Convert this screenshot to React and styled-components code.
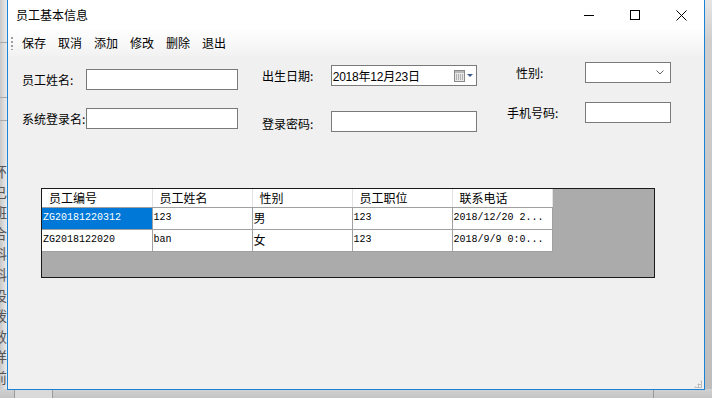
import React from 'react';
import styled, { createGlobalStyle } from 'styled-components';

const Global = createGlobalStyle`
  html, body {
    margin: 0;
    padding: 0;
    width: 712px;
    height: 398px;
    overflow: hidden;
    font-family: "Noto Sans CJK SC", "Liberation Sans", sans-serif;
    font-size: 12px;
    color: #000;
  }
`;

const Desktop = styled.div`
  position: relative;
  width: 712px;
  height: 398px;
  overflow: hidden;
  background: linear-gradient(90deg, #c8c8c8 0px, #e2e2e2 5px, #f0f0f0 8px);
`;

const BackPanel = styled.div`
  position: absolute;
  left: -7px;
  top: 163px;
  display: flex;
  flex-direction: column;
  gap: 4px;
  color: #555;
  font-size: 14px;
  line-height: 16.6px;
`;

const BackLine = styled.div`
  position: absolute;
  left: 0;
  width: 8px;
  top: ${(p) => p.y}px;
  border-top: 1px solid #a8a8a8;
`;

const BottomStrip = styled.div`
  position: absolute;
  left: 0;
  right: 0;
  bottom: 0;
  height: 9px;
  background: linear-gradient(#d2d2d2, #c4c4c4);
  display: flex;
`;

const BottomTab = styled.div`
  width: ${(p) => p.w}px;
  border-right: 1px solid #9a9a9a;
  background: ${(p) => (p.light ? '#dadada' : 'transparent')};
`;

const RightStrip = styled.div`
  position: absolute;
  right: 0;
  top: 0;
  width: 8px;
  height: 390px;
  background: linear-gradient(#e6e6e6, #cfcfcf 40px, #bdbdbd);
`;

const Window = styled.div`
  position: absolute;
  left: 7px;
  top: -1px;
  width: 698px;
  height: 391px;
  box-sizing: border-box;
  border: 1px solid #1883d7;
  background: #f0f0f0;
  display: flex;
  flex-direction: column;
`;

const TitleBar = styled.div`
  height: 30px;
  background: #fff;
  display: flex;
  align-items: center;
  padding-left: 8px;
  flex-shrink: 0;
`;

const Title = styled.div`
  flex: 1;
  font-size: 12px;
  padding-bottom: 2px;
`;

const CtrlButton = styled.div`
  width: 46px;
  height: 30px;
  display: flex;
  align-items: center;
  justify-content: center;
`;

const Toolbar = styled.div`
  height: 26px;
  flex-shrink: 0;
  display: flex;
  align-items: center;
  gap: 12px;
  padding-left: 3px;
  background: linear-gradient(#fefefe, #f2f2f2);
`;

const Grip = styled.div`
  width: 2px;
  height: 14px;
  margin-right: -3px;
  background-image: radial-gradient(circle, #a0a0a0 0.9px, transparent 1px);
  background-size: 2px 4px;
`;

const MenuItem = styled.div`
  font-size: 12px;
  line-height: 16px;
`;

const Form = styled.div`
  height: 132px;
  flex-shrink: 0;
  display: flex;
  padding-left: 14px;
`;

const Column = styled.div`
  width: ${(p) => p.w}px;
  margin-right: ${(p) => p.mr || 0}px;
  padding-top: ${(p) => p.top}px;
  display: flex;
  flex-direction: column;
  gap: ${(p) => p.gap}px;
`;

const Field = styled.div`
  display: flex;
  align-items: center;
  height: 21px;
`;

const Label = styled.div`
  width: ${(p) => p.w}px;
  padding-left: ${(p) => p.indent || 0}px;
  box-sizing: border-box;
  white-space: nowrap;
  font-size: 12px;
  position: relative;
  top: ${(p) => p.dy || 0}px;
`;

const Input = styled.div`
  width: ${(p) => p.w}px;
  height: 21px;
  box-sizing: border-box;
  border: 1px solid #7a7a7a;
  background: #fff;
  display: flex;
  align-items: center;
  padding-left: 1px;
  font-size: 12px;
`;

const DateText = styled.span`
  flex: 1;
  font-family: "Liberation Sans", "Noto Sans CJK SC", sans-serif;
  font-size: 12px;
  letter-spacing: -0.2px;
`;

const Chevron = styled.span`
  margin-left: auto;
  margin-right: ${(p) => (p.tight ? 2 : 6)}px;
  display: flex;
`;

const GridBox = styled.div`
  margin-left: 33px;
  width: 614px;
  height: 90px;
  box-sizing: border-box;
  border: 1px solid #1a1a1a;
  background: #ababab;
`;

const Table = styled.table`
  border-collapse: collapse;
  table-layout: fixed;
  background: #fff;
`;

const HeadCell = styled.th`
  width: ${(p) => p.w}px;
  height: 18px;
  padding: 0 0 0 7px;
  box-sizing: border-box;
  text-align: left;
  font-weight: normal;
  font-size: 12px;
  border-right: 1px solid #e3e3e3;
  border-bottom: 1px solid #a0a0a0;
  white-space: nowrap;
`;

const Cell = styled.td`
  height: 22px;
  padding: 0 0 0 1px;
  box-sizing: border-box;
  border: 1px solid #a0a0a0;
  border-top: none;
  border-left: ${(p) => (p.first ? 'none' : '1px solid #a0a0a0')};
  background: ${(p) => (p.selected ? '#0078d7' : '#fff')};
  color: ${(p) => (p.selected ? '#fff' : '#000')};
  font-family: ${(p) => (p.cjk ? '"Noto Sans CJK SC", sans-serif' : '"Liberation Mono", "DejaVu Sans Mono", monospace')};
  font-size: ${(p) => (p.cjk ? 12 : 10)}px;
  line-height: 14px;
  white-space: nowrap;
  overflow: hidden;
`;

const ResizeGrip = styled.div`
  position: absolute;
  right: 2px;
  bottom: 1px;
  width: 8px;
  height: 8px;
  background-image: radial-gradient(circle, #bcbcbc 1px, transparent 1.1px);
  background-size: 3px 3px;
  clip-path: polygon(100% 0, 100% 100%, 0 100%);
`;

const columns = [
  { title: '员工编号', w: 110 },
  { title: '员工姓名', w: 100 },
  { title: '性别', w: 100 },
  { title: '员工职位', w: 100 },
  { title: '联系电话', w: 100 },
];

const rows = [
  ['ZG20181220312', '123', '男', '123', '2018/12/20 2...'],
  ['ZG2018122020', 'ban', '女', '123', '2018/9/9 0:0...'],
];

const backChars = ['环', '已', '班', '合', '科', '科', '设', '拨', '效', '详', '前'];

const CalendarIcon = () => (
  <svg width="20" height="12" viewBox="0 0 20 12">
    <rect x="0.5" y="0.5" width="10" height="11" fill="#e8e8e8" stroke="#8a8a8a" />
    <rect x="1" y="1" width="9" height="2" fill="#b8b8b8" />
    {[2, 4, 6, 8].map((x) =>
      [4.5, 6.5, 8.5].map((y) => (
        <rect key={x + '-' + y} x={x} y={y} width="1" height="1" fill="#7a7a7a" />
      ))
    )}
    <path d="M13 4 L19 4 L16 7 Z" fill="#3c5a8c" />
  </svg>
);

const App = () => (
  <Desktop>
    <Global />
    <BackPanel>
      {backChars.map((c, i) => (
        <div key={i}>{c}</div>
      ))}
    </BackPanel>
    <BackLine y={42} />
    <BackLine y={97} />
    <BackLine y={120} />
    <RightStrip />
    <BottomStrip>
      <BottomTab w={14} />
      <BottomTab w={37} light />
      <BottomTab w={600} />
    </BottomStrip>

    <Window>
      <TitleBar>
        <Title>员工基本信息</Title>
        <CtrlButton>
          <svg width="10" height="10" viewBox="0 0 10 10">
            <path d="M0 5.5 H10" stroke="#000" strokeWidth="1" />
          </svg>
        </CtrlButton>
        <CtrlButton>
          <svg width="10" height="10" viewBox="0 0 10 10">
            <rect x="0.5" y="0.5" width="9" height="9" fill="none" stroke="#000" />
          </svg>
        </CtrlButton>
        <CtrlButton>
          <svg width="11" height="11" viewBox="0 0 11 11">
            <path d="M0.5 0.5 L10.5 10.5 M10.5 0.5 L0.5 10.5" stroke="#000" strokeWidth="1" />
          </svg>
        </CtrlButton>
      </TitleBar>

      <Toolbar>
        <Grip />
        <MenuItem>保存</MenuItem>
        <MenuItem>取消</MenuItem>
        <MenuItem>添加</MenuItem>
        <MenuItem>修改</MenuItem>
        <MenuItem>删除</MenuItem>
        <MenuItem>退出</MenuItem>
      </Toolbar>

      <Form>
        <Column w={216} mr={24} top={13} gap={18}>
          <Field>
            <Label w={64}>员工姓名:</Label>
            <Input w={152} />
          </Field>
          <Field>
            <Label w={64}>系统登录名:</Label>
            <Input w={152} />
          </Field>
        </Column>
        <Column w={215} mr={30} top={9} gap={25}>
          <Field>
            <Label w={69}>出生日期:</Label>
            <Input w={147}>
              <DateText>2018年12月23日</DateText>
              <Chevron tight>
                <CalendarIcon />
              </Chevron>
            </Input>
          </Field>
          <Field>
            <Label w={69} dy={2}>登录密码:</Label>
            <Input w={147} />
          </Field>
        </Column>
        <Column w={164} top={6} gap={19}>
          <Field>
            <Label w={78} indent={9}>性别:</Label>
            <Input w={87}>
              <Chevron>
                <svg width="8" height="5" viewBox="0 0 8 5">
                  <path d="M0.5 0.5 L4 4 L7.5 0.5" fill="none" stroke="#606060" strokeWidth="1" />
                </svg>
              </Chevron>
            </Input>
          </Field>
          <Field>
            <Label w={78}>手机号码:</Label>
            <Input w={87} />
          </Field>
        </Column>
      </Form>

      <GridBox>
        <Table>
          <thead>
            <tr>
              {columns.map((c) => (
                <HeadCell key={c.title} w={c.w}>
                  {c.title}
                </HeadCell>
              ))}
            </tr>
          </thead>
          <tbody>
            {rows.map((r, ri) => (
              <tr key={ri}>
                {r.map((v, ci) => (
                  <Cell
                    key={ci}
                    first={ci === 0}
                    selected={ri === 0 && ci === 0}
                    cjk={ci === 2}
                  >
                    {v}
                  </Cell>
                ))}
              </tr>
            ))}
          </tbody>
        </Table>
      </GridBox>
      <ResizeGrip />
    </Window>
  </Desktop>
);

export default App;
